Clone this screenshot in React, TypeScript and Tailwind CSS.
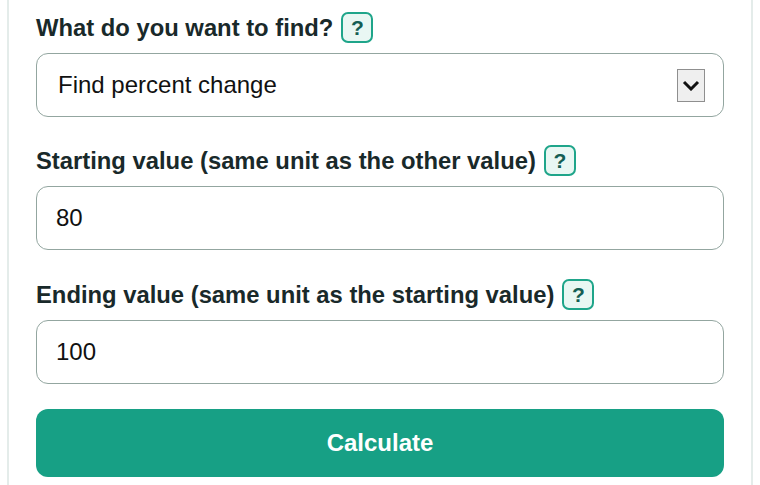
import { useState } from "react";

function HelpBadge() {
  return (
    <button
      type="button"
      className="ml-[8px] inline-flex h-[31px] w-[32px] shrink-0 items-center justify-center rounded-[7px] border-2 border-[#1fa58a] bg-[#e9f7f3] text-[21px] font-bold leading-none text-[#155e54]"
    >
      ?
    </button>
  );
}

function FieldLabel({ text }: { text: string }) {
  return (
    <div className="flex h-[31px] items-center">
      <span className="text-[23.8px] font-bold leading-none text-[#19292a]">{text}</span>
      <HelpBadge />
    </div>
  );
}

export default function App() {
  const [start, setStart] = useState("80");
  const [end, setEnd] = useState("100");

  return (
    <div className="min-h-[485px] bg-white px-[7px] font-['Liberation_Sans',Arial,sans-serif]">
      <div className="flex min-h-[485px] flex-col border-x-2 border-[#e4ecea] px-[27px] pt-[12px]">
        <FieldLabel text="What do you want to find?" />
        <div className="mt-[10px] flex h-[64px] items-center justify-between rounded-[12px] border-[1.5px] border-[#93a6a0] pl-[21px] pr-[18px]">
          <span className="text-[24px] text-[#111]">Find percent change</span>
          <span className="flex h-[33px] w-[28px] items-center justify-center border border-[#8f8f8f] bg-[#efefef]">
            <svg width="18" height="11" viewBox="0 0 18 11">
              <path d="M2 2 L9 9 L16 2" fill="none" stroke="#111" strokeWidth="3" />
            </svg>
          </span>
        </div>

        <div className="mt-[28px]">
          <FieldLabel text="Starting value (same unit as the other value)" />
        </div>
        <input
          value={start}
          onChange={(e) => setStart(e.target.value)}
          className="mt-[10px] h-[64px] rounded-[12px] border-[1.5px] border-[#93a6a0] px-[19px] text-[24px] text-[#111] outline-none"
        />

        <div className="mt-[29px]">
          <FieldLabel text="Ending value (same unit as the starting value)" />
        </div>
        <input
          value={end}
          onChange={(e) => setEnd(e.target.value)}
          className="mt-[10px] h-[64px] rounded-[12px] border-[1.5px] border-[#93a6a0] px-[19px] text-[24px] text-[#111] outline-none"
        />

        <button
          type="button"
          className="mt-[25px] h-[68px] rounded-[12px] bg-[#17a085] text-[24px] font-bold text-white"
        >
          Calculate
        </button>
      </div>
    </div>
  );
}
